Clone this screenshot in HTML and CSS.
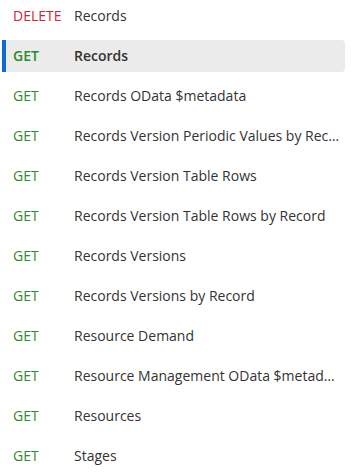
FILE: index.html
```html
<!DOCTYPE html>
<html lang="en">
<head>
<meta charset="UTF-8" />
<title>Endpoints</title>
<link rel="stylesheet" href="styles.css">
</head>
<body>

<ul class="endpoints">
  <li class="endpoint"><span class="method delete">DELETE</span><span class="name">Records</span></li>
  <li class="endpoint active"><span class="method get">GET</span><span class="name">Records</span></li>
  <li class="endpoint"><span class="method get">GET</span><span class="name">Records OData $metadata</span></li>
  <li class="endpoint"><span class="method get">GET</span><span class="name">Records Version Periodic Values by Record</span></li>
  <li class="endpoint"><span class="method get">GET</span><span class="name">Records Version Table Rows</span></li>
  <li class="endpoint"><span class="method get">GET</span><span class="name">Records Version Table Rows by Record</span></li>
  <li class="endpoint"><span class="method get">GET</span><span class="name">Records Versions</span></li>
  <li class="endpoint"><span class="method get">GET</span><span class="name">Records Versions by Record</span></li>
  <li class="endpoint"><span class="method get">GET</span><span class="name">Resource Demand</span></li>
  <li class="endpoint"><span class="method get">GET</span><span class="name">Resource Management OData $metadata</span></li>
  <li class="endpoint"><span class="method get">GET</span><span class="name">Resources</span></li>
  <li class="endpoint"><span class="method get">GET</span><span class="name">Stages</span></li>
</ul>

</body>
</html>
```

FILE: styles.css
```css
body { margin: 0; background: #fff; font-family: "Open Sans", Arial, sans-serif; font-size: 14px; color: #333; }
.endpoints { list-style: none; margin: 0; padding: 0 7px 0 2px; display: flex; flex-direction: column; gap: 8px; }
.endpoint { box-sizing: border-box; display: flex; align-items: center; height: 32px; padding: 0 3px 2px 11px; border-left: 4px solid transparent; margin-left: -4px; border-radius: 0 4px 4px 0; white-space: nowrap; }
.endpoint.active { background: #ebebeb; border-left-color: #0a6ed1; margin-left: 0; padding-left: 7px; font-weight: 600; }
.method { flex: 0 0 61px; }
.method.delete { color: #c8283a; }
.method.get { color: #2b8a2b; }
.name { overflow: hidden; text-overflow: ellipsis; min-width: 0; }
```
